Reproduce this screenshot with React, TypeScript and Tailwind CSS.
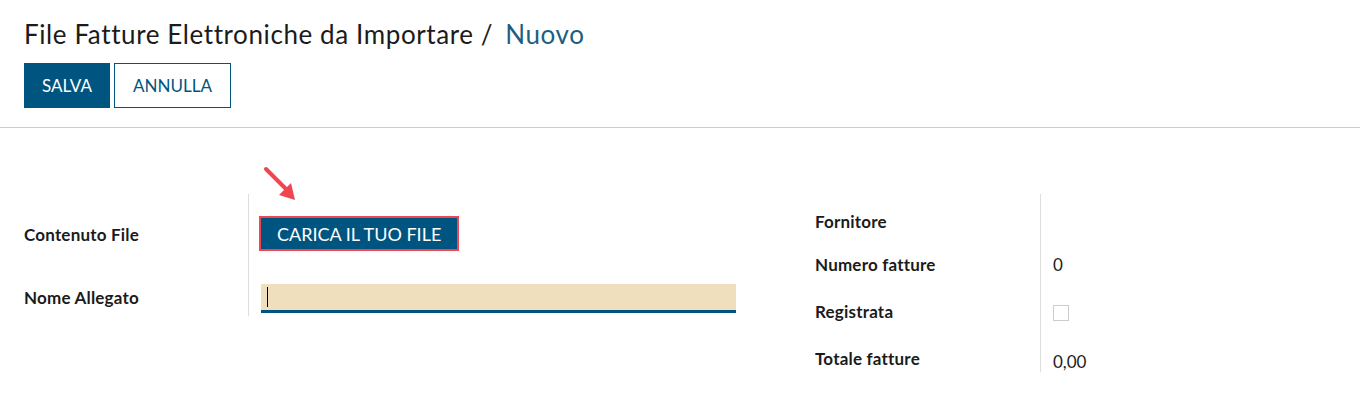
import React from 'react';

const fieldsRight = [
  { label: 'Fornitore', value: '', h: 'h-[43px]' },
  { label: 'Numero fatture', value: '0', h: 'h-[47px]' },
  { label: 'Registrata', value: 'check', h: 'h-[47px]' },
  { label: 'Totale fatture', value: '0,00', h: 'h-[40px]' },
];

export default function App() {
  return (
    <div className="w-[1360px] h-[420px] bg-white text-[#1b1b1b] font-['Lato','Liberation_Sans',sans-serif] relative">
      {/* header */}
      <div className="px-6 pt-[18px]">
        <h1 className="text-[26px] leading-[32px] font-normal tracking-[0.6px]">
          File Fatture Elettroniche da Importare /<span className="ml-3 text-[#1d5e80]">Nuovo</span>
        </h1>
        <div className="flex gap-1 mt-[13px]">
          <button className="w-[86px] h-[45px] bg-[#005580] text-white text-[17px]">SALVA</button>
          <button className="w-[117px] h-[45px] border border-[#005580] text-[#005580] text-[17px] bg-white">ANNULLA</button>
        </div>
      </div>
      <div className="mt-[19px] border-t border-[#cccccc]" />

      {/* form */}
      <div className="flex pl-6 pt-[66px] items-start">
        <div className="flex w-[712px] items-start">
          <div className="w-[224px] flex flex-col font-bold text-[17px] tracking-[0.2px]">
            <div className="h-[62px] pt-[31px] leading-[20px]">Contenuto File</div>
            <div className="h-[60px] pt-[32px] leading-[20px]">Nome Allegato</div>
          </div>
          <div className="flex-1 border-l border-[#dddddd] pl-3 h-[122px]">
            <div className="h-[90px] pt-[22px]">
              <button className="h-[35px] px-4 bg-[#005580] text-white text-[18px] leading-none border-2 border-[#ee4652] ml-[-2px]">
                CARICA IL TUO FILE
              </button>
            </div>
            <div className="h-[26px] bg-[#efdfbd] border-b-[3px] border-[#005580] box-content flex items-center pl-[6px]">
              <span className="w-px h-[20px] bg-black" />
            </div>
          </div>
        </div>
        <div className="flex ml-[79px]">
          <div className="w-[225px] flex flex-col font-bold text-[17px] tracking-[0.2px] pt-[18px]">
            {fieldsRight.map((f) => (
              <div key={f.label} className={`${f.h} leading-[20px]`}>{f.label}</div>
            ))}
          </div>
          <div className="w-[120px] border-l border-[#dddddd] pl-3 pt-[18px] text-[17px] h-[178px]">
            {fieldsRight.map((f) => (
              <div key={f.label} className={`${f.h} leading-[20px]`}>
                {f.value === 'check' ? (
                  <span className="block w-[16px] h-[16px] border border-[#cccccc] mt-[3px]" />
                ) : (
                  f.value
                )}
              </div>
            ))}
          </div>
        </div>
      </div>

      {/* annotation arrow */}
      <svg className="absolute left-[258px] top-[162px]" width="46" height="46" viewBox="0 0 46 46">
        <line x1="8" y1="7" x2="29" y2="28" stroke="#ef4651" strokeWidth="4" strokeLinecap="round" />
        <polygon points="37,38 21,33 33,21" fill="#ef4651" />
      </svg>
    </div>
  );
}
